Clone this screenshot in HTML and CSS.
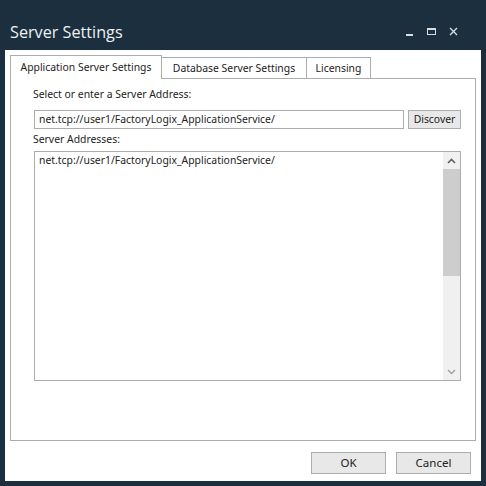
FILE: index.html
```html
<!DOCTYPE html>
<html>
<head>
<meta charset="utf-8">
<link rel="stylesheet" href="styles.css">
</head>
<body>
<div class="titlebar">
  <div class="title">Server Settings</div>
  <div class="controls">
    <svg class="ctl" width="12" height="12" viewBox="0 0 12 12"><rect x="2" y="8" width="7" height="2" fill="#d8dde1"/></svg>
    <svg class="ctl" width="12" height="12" viewBox="0 0 12 12"><rect x="1.5" y="2.5" width="8" height="6" fill="none" stroke="#d8dde1" stroke-width="1"/><rect x="1" y="2" width="9" height="2" fill="#d8dde1"/></svg>
    <svg class="ctl" width="12" height="12" viewBox="0 0 12 12"><path d="M2 2 L9 9 M9 2 L2 9" stroke="#d8dde1" stroke-width="1.4"/></svg>
  </div>
</div>
<div class="window">
  <div class="tabs">
    <div class="tab active t1">Application Server Settings</div>
    <div class="tab t2">Database Server Settings</div>
    <div class="tab t3">Licensing</div>
  </div>
  <div class="panel">
    <div class="label">Select or enter a Server Address:</div>
    <div class="row">
      <div class="textbox">net.tcp://user1/FactoryLogix_ApplicationService/</div>
      <div class="btn discover">Discover</div>
    </div>
    <div class="label label2">Server Addresses:</div>
    <div class="listbox">
      <div class="items">
        <div class="item">net.tcp://user1/FactoryLogix_ApplicationService/</div>
      </div>
      <div class="scrollbar">
        <div class="arrow up"><svg width="9" height="6" viewBox="0 0 9 6"><path d="M1 5 L4.5 1.5 L8 5" fill="none" stroke="#606060" stroke-width="1.6"/></svg></div>
        <div class="thumb"></div>
        <div class="track"></div>
        <div class="arrow down"><svg width="9" height="6" viewBox="0 0 9 6"><path d="M1 1 L4.5 4.5 L8 1" fill="none" stroke="#a0a0a0" stroke-width="1.4"/></svg></div>
      </div>
    </div>
  </div>
  <div class="footer">
    <div class="btn ok">OK</div>
    <div class="btn cancel">Cancel</div>
  </div>
</div>
</body>
</html>
```
FILE: styles.css
```css
html, body {
  margin: 0;
  padding: 0;
  width: 486px;
  height: 486px;
  background: #1b2f3e;
  overflow: hidden;
}
body {
  font-family: "Noto Sans", "DejaVu Sans", sans-serif;
  font-size: 10.4px;
  color: #222;
}
.titlebar {
  height: 50px;
  display: flex;
  align-items: flex-end;
  justify-content: space-between;
  box-sizing: border-box;
  padding: 0 26px 6px 10px;
}
.title {
  font-family: "Open Sans", "Noto Sans", sans-serif;
  font-weight: 400;
  font-size: 16.2px;
  color: #eef2f5;
  line-height: 24px;
}
.controls {
  display: flex;
  gap: 10px;
  padding-bottom: 6px;
}
.ctl { display: block; }
.window {
  margin: 0 5px;
  height: 431px;
  background: #fff;
  display: flex;
  flex-direction: column;
  padding: 5px 5px 0 5px;
  box-sizing: border-box;
}
.tabs {
  display: flex;
  align-items: flex-end;
  height: 23px;
  position: relative;
  z-index: 1;
}
.tab {
  height: 21px;
  box-sizing: border-box;
  border: 1px solid #acacac;
  border-bottom: none;
  line-height: 20px;
  text-align: center;
  background: #fff;
  color: #222;
}
.tab + .tab { border-left: none; }
.t1 { width: 152px; }
.t2 { width: 145px; }
.t3 { width: 64px; }
.tab.active {
  height: 24px;
  line-height: 22px;
  margin-bottom: -1px;
}
.panel {
  height: 363px;
  box-sizing: border-box;
  border: 1px solid #acacac;
  padding: 8px 14px 0 23px;
  display: flex;
  flex-direction: column;
}
.label {
  line-height: 15px;
  margin-left: -1px;
}
.row {
  display: flex;
  gap: 4px;
  margin-top: 8px;
}
.textbox {
  flex: 1;
  height: 19px;
  box-sizing: border-box;
  border: 1px solid #acacac;
  padding: 0 4px;
  line-height: 17px;
}
.btn {
  box-sizing: border-box;
  border: 1px solid #adadad;
  background: #e8e8e8;
  text-align: center;
  color: #222;
}
.discover {
  width: 53px;
  height: 19px;
  line-height: 17px;
}
.label2 {
  margin-top: 3px;
}
.listbox {
  margin-top: 4px;
  height: 230px;
  box-sizing: border-box;
  border: 1px solid #acacac;
  display: flex;
}
.items {
  flex: 1;
  padding: 1px 4px;
}
.item { line-height: 15px; }
.scrollbar {
  width: 17px;
  background: #f0f0f0;
  display: flex;
  flex-direction: column;
}
.arrow {
  height: 17px;
  display: flex;
  align-items: center;
  justify-content: center;
}
.arrow svg { display: block; }
.thumb {
  height: 107px;
  background: #cdcdcd;
}
.track { flex: 1; }
.footer {
  flex: 1;
  display: flex;
  justify-content: flex-end;
  align-items: flex-start;
  gap: 10px;
  padding: 11px 5px 0 0;
}
.ok, .cancel {
  width: 75px;
  height: 22px;
  line-height: 20px;
  font-size: 11.5px;
}
```
